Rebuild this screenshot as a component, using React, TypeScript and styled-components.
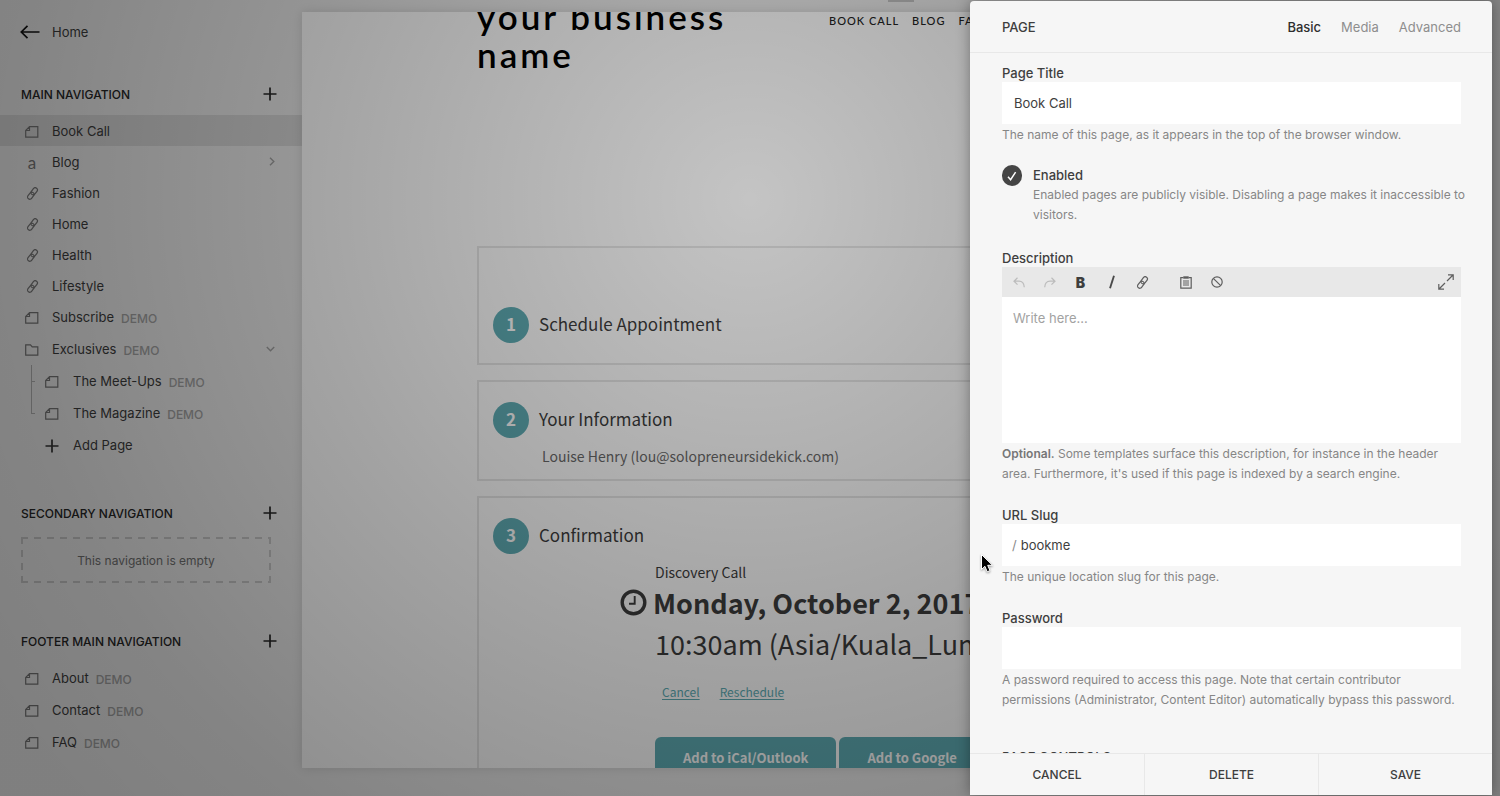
import React from "react";
import styled, { createGlobalStyle, css } from "styled-components";

const ui = `Inter, "Liberation Sans", sans-serif`;
const site = `"Noto Sans CJK SC", "Noto Sans", sans-serif`;
const brand = `Lato, "Liberation Sans", sans-serif`;
const teal = "#60aeb6";

const Global = createGlobalStyle`
  *, *::before, *::after { box-sizing: border-box; }
  body { margin: 0; font-family: ${ui}; background: #ebebeb; }
  button, input, textarea { font: inherit; color: inherit; border: 0; padding: 0; background: none; border-radius: 0; }
  a { color: inherit; text-decoration: none; }
  ul { list-style: none; margin: 0; padding: 0; }
  h1, h2, h3, p { margin: 0; font-weight: inherit; font-size: inherit; }
  svg { display: block; flex: none; }
`;

const Screen = styled.div`
  position: relative;
  display: flex;
  height: 100vh;
  overflow: hidden;
  background: #ebebeb;
`;

/* ---------- sidebar ---------- */

const Sidebar = styled.nav`
  flex: none;
  width: 302px;
  padding-top: 16px;
  color: #3c3c3c;
  font-size: 13px;
`;

const BackLink = styled.a`
  display: flex;
  align-items: center;
  gap: 12px;
  height: 32px;
  padding-left: 20px;
  margin-bottom: 31px;
`;

const SectionHead = styled.div`
  display: flex;
  align-items: center;
  justify-content: space-between;
  height: 30px;
  padding: 0 25px 0 21px;
  margin-bottom: 6px;
  font-size: 12px;
  font-weight: 500;
  color: #262626;
`;

const Section = styled.section`
  margin-bottom: 38px;
`;

const IconButton = styled.button`
  display: flex;
`;

const row = css`
  display: flex;
  align-items: center;
  width: 100%;
  padding-right: 27px;
`;

const Item = styled.a<{ $active?: boolean; $tall?: boolean; $nested?: boolean }>`
  ${row}
  height: ${(p) => (p.$tall ? 32 : 31)}px;
  padding-left: ${(p) => (p.$nested ? 45 : 25)}px;
  background: ${(p) => (p.$active ? "#d6d6d6" : "transparent")};
`;

const AddItem = styled.button`
  ${row}
  height: 31px;
  padding-left: 45px;
  text-align: left;
`;

const ItemIcon = styled.span<{ $dark?: boolean }>`
  display: flex;
  flex: none;
  justify-content: center;
  width: 14px;
  margin: 2px 13px 0 0;
  color: ${(p) => (p.$dark ? "#333" : "#767676")};
`;

const NestedIcon = styled(ItemIcon)`
  margin-right: 14px;
`;

const Letter = styled.span`
  font-family: ${brand};
  font-size: 17px;
  line-height: 17px;
`;

const Demo = styled.span`
  margin: 2px 0 0 7px;
  font-size: 12px;
  font-weight: 500;
  color: #a2a2a2;
`;

const Caret = styled.span`
  margin-left: auto;
  color: #a2a2a2;
`;

const SubList = styled.ul`
  position: relative;
  &::before {
    content: "";
    position: absolute;
    left: 31px;
    top: 0;
    bottom: 15px;
    border-left: 1px solid #b0b0b0;
  }
`;

const SubItem = styled.li`
  position: relative;
  &::before {
    content: "";
    position: absolute;
    left: 31px;
    top: 16px;
    width: 4px;
    border-top: 1px solid #b0b0b0;
  }
`;

const dashX = "linear-gradient(90deg, #c6c6c6 7px, transparent 7px)";
const dashY = "linear-gradient(180deg, #c6c6c6 7px, transparent 7px)";
const EmptyBox = styled.div`
  display: flex;
  align-items: center;
  justify-content: center;
  height: 46px;
  margin: 9px 31px 43px 21px;
  font-size: 12px;
  color: #707070;
  background:
    ${dashX} 0 0 / 13px 2px repeat-x,
    ${dashX} 0 100% / 13px 2px repeat-x,
    ${dashY} 0 0 / 2px 13px repeat-y,
    ${dashY} 100% 0 / 2px 13px repeat-y;
`;

/* ---------- website preview ---------- */

const Preview = styled.main`
  display: flex;
  flex: 1;
  flex-direction: column;
  min-width: 0;
  padding-bottom: 28px;
`;

const HandleStrip = styled.div`
  display: flex;
  flex: none;
  justify-content: center;
  height: 12px;
`;

const Handle = styled.span`
  width: 26px;
  height: 2px;
  background: #c0c0c0;
`;

const Frame = styled.div`
  flex: 1;
  min-height: 0;
  margin-right: 20px;
  overflow: hidden;
  background: #fff;
  box-shadow: 0 0 10px rgba(0, 0, 0, 0.12);
`;

const SitePage = styled.div`
  margin-top: -15px;
  padding: 0 0 40px 175px;
  color: #3d3d3d;
  font-family: ${site};
`;

const SiteHeader = styled.header`
  display: flex;
  align-items: flex-start;
  gap: 52px;
  height: 249px;
  font-family: ${brand};
  color: #000;
`;

const SiteTitle = styled.h1`
  flex: none;
  width: 300px;
  font-size: 35px;
  line-height: 38px;
  font-weight: 600;
  letter-spacing: 3px;
`;

const SiteNav = styled.nav`
  display: flex;
  gap: 13px;
  padding-top: 15px;
  font-size: 11px;
  line-height: 18px;
  font-weight: 500;
  letter-spacing: 1px;
  color: #222;
  white-space: nowrap;
`;

const Steps = styled.div`
  display: flex;
  flex-direction: column;
  gap: 15px;
`;

const Step = styled.section<{ $roomy?: boolean; $flush?: boolean }>`
  padding: ${(p) => (p.$roomy ? 59 : 20)}px 14px ${(p) => (p.$flush ? 11 : 20)}px;
  border: 2px solid #e7e7e7;
`;

const StepHead = styled.h2`
  display: flex;
  align-items: flex-start;
  gap: 10px;
  font-size: 17px;
  line-height: 34px;
`;

const StepNumber = styled.span`
  width: 36px;
  height: 36px;
  border-radius: 50%;
  background: ${teal};
  color: #fff;
  font-weight: 700;
  text-align: center;
`;

const StepNote = styled.p`
  margin: 6px 0 0 49px;
  font-size: 14px;
  line-height: 24px;
  color: #6a6a6a;
`;

const Booking = styled.div`
  display: grid;
  grid-template-columns: 27px 1fr;
  column-gap: 6px;
  margin: 8px 0 0 127px;
  white-space: nowrap;
  > * { grid-column: 2; }
`;

const ClockCell = styled.span`
  grid-column: 1;
  grid-row: 2;
  align-self: center;
`;

const Service = styled.p`
  padding-left: 2px;
  font-size: 14px;
  line-height: 20px;
`;

const When = styled.p<{ $bold?: boolean }>`
  padding-left: ${(p) => (p.$bold ? 0 : 2)}px;
  font-size: 27px;
  line-height: 41px;
  font-weight: ${(p) => (p.$bold ? 700 : 400)};
`;

const BookingLinks = styled.div`
  display: flex;
  gap: 20px;
  padding: 18px 0 35px 9px;
  font-size: 12px;
  line-height: 20px;
  color: ${teal};
  a { text-decoration: underline; text-underline-offset: 2px; }
`;

const CalendarButtons = styled.div`
  display: flex;
  gap: 3px;
  padding-left: 2px;
`;

const CalendarButton = styled.button`
  padding: 0 28px;
  border-radius: 6px;
  background: ${teal};
  color: #fff;
  font-size: 13px;
  line-height: 41px;
  font-weight: 700;
`;

/* ---------- settings dialog ---------- */

const Scrim = styled.div`
  position: absolute;
  inset: 0;
  background: radial-gradient(
    circle at 50% 25%,
    rgba(0, 0, 0, 0.23) 0,
    rgba(0, 0, 0, 0.36) 445px,
    rgba(0, 0, 0, 0.44) 745px,
    rgba(0, 0, 0, 0.46) 900px
  );
`;

const Dialog = styled.form`
  position: absolute;
  top: 1px;
  right: 8px;
  bottom: 1px;
  display: flex;
  flex-direction: column;
  width: 522px;
  border-radius: 4px 4px 0 0;
  background: #f6f6f6;
  box-shadow: 0 0 14px rgba(0, 0, 0, 0.35);
  color: #3e3e3e;
  font-size: 13px;
`;

const DialogHead = styled.header`
  display: flex;
  flex: none;
  align-items: center;
  justify-content: space-between;
  height: 52px;
  padding: 0 31px 0 32px;
  border-bottom: 1px solid #e8e8e8;
  font-weight: 500;
`;

const Tabs = styled.div`
  display: flex;
  gap: 20px;
`;

const Tab = styled.button<{ $active?: boolean }>`
  color: ${(p) => (p.$active ? "#2e2e2e" : "#8e8e8e")};
  font-weight: ${(p) => (p.$active ? 500 : 400)};
`;

const DialogBody = styled.div`
  flex: 1;
  min-height: 0;
  padding: 11px 31px 0 32px;
  overflow-y: auto;
  scrollbar-width: none;
`;

const Field = styled.div<{ $tight?: boolean }>`
  margin-bottom: ${(p) => (p.$tight ? 20 : 22)}px;
`;

const Label = styled.label`
  display: block;
  line-height: 18px;
  font-weight: 500;
`;

const TextInput = styled.input`
  display: block;
  width: 100%;
  height: 42px;
  padding: 0 12px;
  background: #fff;
  outline: none;
`;

const SlugBox = styled.div`
  display: flex;
  align-items: center;
  gap: 4px;
  padding-left: 10px;
  background: #fff;
  ${TextInput} { padding: 0; }
`;

const Slash = styled.span`
  color: #8a8a8a;
`;

const Help = styled.p`
  margin-top: 1px;
  font-size: 12px;
  line-height: 20px;
  color: #868686;
  strong { font-weight: 600; color: #777; }
`;

const EnabledRow = styled.div`
  display: flex;
  gap: 11px;
  margin: 0 -8px 24px 0;
  ${Label} { line-height: 20px; }
  ${Help} { margin-top: 0; }
`;

const Check = styled.span`
  display: grid;
  flex: none;
  place-items: center;
  height: 21px;
  > * { grid-area: 1 / 1; }
  svg { pointer-events: none; }
`;

const CheckInput = styled.input`
  appearance: none;
  width: 20px;
  height: 21px;
  margin: 0;
  border-radius: 10px;
  background: #454545;
`;

const Toolbar = styled.div`
  display: flex;
  height: 30px;
  padding-left: 1px;
  background: #e8e8e8;
`;

const Tool = styled.button<{ $muted?: boolean; $spaced?: boolean; $end?: boolean }>`
  display: flex;
  align-items: center;
  justify-content: center;
  width: 31px;
  height: 30px;
  margin-left: ${(p) => (p.$end ? "auto" : p.$spaced ? "12px" : "0")};
  color: ${(p) => (p.$muted ? "#bcbcbc" : "#5e5e5e")};
`;

const BoldGlyph = styled.b`
  font-size: 14px;
  font-weight: 900;
  color: #3e3e3e;
`;

const Editor = styled.textarea`
  display: block;
  width: 100%;
  height: 146px;
  padding: 11px;
  resize: none;
  outline: none;
  background: #fff;
  line-height: 20px;
  &::placeholder { color: #a2a2a2; opacity: 1; }
`;

const GroupTitle = styled.h3`
  padding-top: 16px;
  line-height: 18px;
  font-size: 13px;
  font-weight: 500;
`;

const DialogFoot = styled.footer`
  display: grid;
  flex: none;
  grid-template-columns: repeat(3, 1fr);
  height: 42px;
  border-top: 1px solid #e8e8e8;
`;

const FootButton = styled.button`
  font-size: 12px;
  font-weight: 500;
  & + & { border-left: 1px solid #e8e8e8; }
`;

const Pointer = styled.span`
  position: absolute;
  left: 10px;
  top: 552px;
  filter: drop-shadow(0 1px 1px rgba(0, 0, 0, 0.4));
`;

/* ---------- icons ---------- */

const line = { fill: "none", stroke: "currentColor" } as const;

const PlusIcon = () => (
  <svg width="14" height="14" viewBox="0 0 14 14" {...line} strokeWidth="1.7">
    <path d="M7 .5v13M.5 7h13" />
  </svg>
);
const BackIcon = () => (
  <svg width="20" height="14" viewBox="0 0 20 14" fill="none" stroke="#111" strokeWidth="1.7">
    <path d="M1.500 7H19.500M7.500 .8 1.300 7l6.200 6.200" />
  </svg>
);
const PageIcon = () => (
  <svg width="14" height="12" viewBox="0 0 14 12" {...line} strokeWidth="1.2">
    <path d="M4.500 .7h8.300v10.500H.7V4.500zM4.500 .7v3.800H.7" />
  </svg>
);
const FolderIcon = () => (
  <svg width="14" height="12" viewBox="0 0 14 12" {...line} strokeWidth="1.2">
    <path d="M.7 .9h4.800l1.700 1.900h5.600v8.300H.7z" />
  </svg>
);
const LinkIcon = () => (
  <svg width="13" height="13" viewBox="0 0 14 14" {...line} strokeWidth="1.3">
    <g transform="rotate(-53 7 7)">
      <rect x="-.2" y="4.600" width="8.400" height="4.800" rx="2.400" />
      <rect x="5.800" y="4.600" width="8.400" height="4.800" rx="2.400" />
    </g>
  </svg>
);
const RightIcon = () => (
  <svg width="6" height="9" viewBox="0 0 6 9" {...line} strokeWidth="1.400">
    <path d="M1 .8 4.800 4.500 1 8.200" />
  </svg>
);
const DownIcon = () => (
  <svg width="9" height="6" viewBox="0 0 9 6" {...line} strokeWidth="1.400">
    <path d="M.8 1 4.500 4.800 8.200 1" />
  </svg>
);
const ClockIcon = () => (
  <svg width="27" height="27" viewBox="0 0 27 27" {...line}>
    <circle cx="13.500" cy="13.500" r="11.300" strokeWidth="3.400" />
    <path d="M14.700 7v7.700H9" strokeWidth="1.900" />
  </svg>
);
const CheckIcon = () => (
  <svg width="10" height="10" viewBox="0 0 10 10" fill="none" stroke="#fff" strokeWidth="1.500">
    <path d="M1 5.800 3.600 8.700 8.600 1.200" />
  </svg>
);
const UndoIcon = () => (
  <svg width="12" height="11" viewBox="0 0 12 11" {...line} strokeWidth="1.200">
    <path d="M4.500 .8 1 4.200l3.500 3.400M1 4.200h5c3.500 0 5 2.500 5.300 6" />
  </svg>
);
const RedoIcon = () => (
  <svg width="12" height="11" viewBox="0 0 12 11" {...line} strokeWidth="1.200">
    <path d="M7.500 .8 11 4.200 7.500 7.600M11 4.200H6C2.500 4.200 1 6.700 .7 10.200" />
  </svg>
);
const ItalicIcon = () => (
  <svg width="8" height="14" viewBox="0 0 8 14" fill="none" stroke="#4a4a4a" strokeWidth="1.900">
    <path d="M6 .8 2 13.200" />
  </svg>
);
const ClipboardIcon = () => (
  <svg width="12" height="13" viewBox="0 0 12 13" {...line} strokeWidth="1.200">
    <path d="M3.500 1.600H.8v10.600h10.400V1.600H8.500" />
    <path d="M3.300 1.500h5.400" strokeWidth="2.400" />
    <path d="M3 5h6M3 7h6M3 9h6" />
  </svg>
);
const BanIcon = () => (
  <svg width="12" height="12" viewBox="0 0 12 12" {...line} strokeWidth="1.200">
    <circle cx="6" cy="6" r="5.200" />
    <path d="M2.300 2.300 9.700 9.700" />
  </svg>
);
const ExpandIcon = () => (
  <svg width="16" height="16" viewBox="0 0 16 16" {...line} strokeWidth="1.200">
    <path d="M9 7l6-6M10 .8h5.200V6M7 9l-6 6M.8 10v5.200H6" />
  </svg>
);
const PointerIcon = () => (
  <svg width="14" height="21" viewBox="0 0 14 21">
    <path
      d="M1.500 1.500v15l3.400-3.200 2.300 5.500 2.800-1.200-2.300-5.300h4.800z"
      fill="#000"
      stroke="#fff"
      strokeWidth="1"
    />
  </svg>
);

/* ---------- data ---------- */

type Kind = "page" | "blog" | "link" | "folder";
type Entry = { label: string; kind: Kind; demo?: boolean; active?: boolean; caret?: "right" | "down" };

const mainItems: Entry[] = [
  { label: "Book Call", kind: "page", active: true },
  { label: "Blog", kind: "blog", caret: "right" },
  { label: "Fashion", kind: "link" },
  { label: "Home", kind: "link" },
  { label: "Health", kind: "link" },
  { label: "Lifestyle", kind: "link" },
  { label: "Subscribe", kind: "page", demo: true },
  { label: "Exclusives", kind: "folder", demo: true, caret: "down" },
];
const exclusives = ["The Meet-Ups", "The Magazine"];
const footerItems: Entry[] = ["About", "Contact", "FAQ"].map((label) => ({ label, kind: "page", demo: true }));

const icons: Record<Kind, React.ReactNode> = {
  page: <PageIcon />,
  blog: <Letter>a</Letter>,
  link: <LinkIcon />,
  folder: <FolderIcon />,
};

const NavEntry = ({ label, kind, demo, active, caret }: Entry) => (
  <Item href="#" $active={active} $tall={demo}>
    <ItemIcon>{icons[kind]}</ItemIcon>
    {label}
    {demo && <Demo>DEMO</Demo>}
    {caret && <Caret>{caret === "right" ? <RightIcon /> : <DownIcon />}</Caret>}
  </Item>
);

const Heading = ({ children }: { children: string }) => (
  <SectionHead>
    <h2>{children}</h2>
    <IconButton type="button" aria-label="Add page">
      <PlusIcon />
    </IconButton>
  </SectionHead>
);

export default function App() {
  return (
    <>
      <Global />
      <Screen>
        <Sidebar>
          <BackLink href="#">
            <BackIcon />
            Home
          </BackLink>
          <Section>
            <Heading>MAIN NAVIGATION</Heading>
            <ul>
              {mainItems.map((item) => (
                <li key={item.label}>
                  <NavEntry {...item} />
                </li>
              ))}
            </ul>
            <SubList>
              {exclusives.map((label) => (
                <SubItem key={label}>
                  <Item href="#" $nested $tall>
                    <NestedIcon>
                      <PageIcon />
                    </NestedIcon>
                    {label}
                    <Demo>DEMO</Demo>
                  </Item>
                </SubItem>
              ))}
            </SubList>
            <AddItem type="button">
              <NestedIcon $dark>
                <PlusIcon />
              </NestedIcon>
              Add Page
            </AddItem>
          </Section>
          <Heading>SECONDARY NAVIGATION</Heading>
          <EmptyBox>This navigation is empty</EmptyBox>
          <Heading>FOOTER MAIN NAVIGATION</Heading>
          <ul>
            {footerItems.map((item) => (
              <li key={item.label}>
                <NavEntry {...item} />
              </li>
            ))}
          </ul>
        </Sidebar>

        <Preview>
          <HandleStrip>
            <Handle />
          </HandleStrip>
          <Frame>
            <SitePage>
              <SiteHeader>
                <SiteTitle>your business name</SiteTitle>
                <SiteNav>
                  <a href="#">BOOK CALL</a>
                  <a href="#">BLOG</a>
                  <a href="#">FASHION</a>
                </SiteNav>
              </SiteHeader>
              <Steps>
                <Step $roomy>
                  <StepHead>
                    <StepNumber>1</StepNumber>Schedule Appointment
                  </StepHead>
                </Step>
                <Step $flush>
                  <StepHead>
                    <StepNumber>2</StepNumber>Your Information
                  </StepHead>
                  <StepNote>Louise Henry (lou@solopreneursidekick.com)</StepNote>
                </Step>
                <Step>
                  <StepHead>
                    <StepNumber>3</StepNumber>Confirmation
                  </StepHead>
                  <Booking>
                    <Service>Discovery Call</Service>
                    <ClockCell>
                      <ClockIcon />
                    </ClockCell>
                    <When $bold>Monday, October 2, 2017</When>
                    <When>10:30am (Asia/Kuala_Lumpur)</When>
                    <BookingLinks>
                      <a href="#">Cancel</a>
                      <a href="#">Reschedule</a>
                    </BookingLinks>
                    <CalendarButtons>
                      <CalendarButton type="button">Add to iCal/Outlook</CalendarButton>
                      <CalendarButton type="button">Add to Google</CalendarButton>
                    </CalendarButtons>
                  </Booking>
                </Step>
              </Steps>
            </SitePage>
          </Frame>
        </Preview>

        <Scrim />

        <Dialog aria-label="Page settings" onSubmit={(e) => e.preventDefault()}>
          <DialogHead>
            <h2>PAGE</h2>
            <Tabs>
              <Tab type="button" $active>
                Basic
              </Tab>
              <Tab type="button">Media</Tab>
              <Tab type="button">Advanced</Tab>
            </Tabs>
          </DialogHead>
          <DialogBody>
            <Field $tight>
              <Label htmlFor="title">Page Title</Label>
              <TextInput id="title" defaultValue="Book Call" />
              <Help>The name of this page, as it appears in the top of the browser window.</Help>
            </Field>
            <EnabledRow>
              <Check>
                <CheckInput id="enabled" type="checkbox" defaultChecked />
                <CheckIcon />
              </Check>
              <div>
                <Label htmlFor="enabled">Enabled</Label>
                <Help>
                  Enabled pages are publicly visible. Disabling a page makes it inaccessible to visitors.
                </Help>
              </div>
            </EnabledRow>
            <Field>
              <Label htmlFor="description">Description</Label>
              <Toolbar>
                <Tool type="button" $muted aria-label="Undo"><UndoIcon /></Tool>
                <Tool type="button" $muted aria-label="Redo"><RedoIcon /></Tool>
                <Tool type="button" aria-label="Bold"><BoldGlyph>B</BoldGlyph></Tool>
                <Tool type="button" aria-label="Italic"><ItalicIcon /></Tool>
                <Tool type="button" aria-label="Link"><LinkIcon /></Tool>
                <Tool type="button" $spaced aria-label="Paste"><ClipboardIcon /></Tool>
                <Tool type="button" aria-label="Clear formatting"><BanIcon /></Tool>
                <Tool type="button" $end aria-label="Expand"><ExpandIcon /></Tool>
              </Toolbar>
              <Editor id="description" placeholder="Write here..." />
              <Help>
                <strong>Optional.</strong> Some templates surface this description, for instance in the header
                area. Furthermore, it's used if this page is indexed by a search engine.
              </Help>
            </Field>
            <Field>
              <Label htmlFor="slug">URL Slug</Label>
              <SlugBox>
                <Slash>/</Slash>
                <TextInput id="slug" defaultValue="bookme" />
              </SlugBox>
              <Help>The unique location slug for this page.</Help>
            </Field>
            <Field>
              <Label htmlFor="password">Password</Label>
              <TextInput id="password" type="password" />
              <Help>
                A password required to access this page. Note that certain contributor permissions
                (Administrator, Content Editor) automatically bypass this password.
              </Help>
            </Field>
            <GroupTitle>PAGE CONTROLS</GroupTitle>
          </DialogBody>
          <DialogFoot>
            <FootButton type="button">CANCEL</FootButton>
            <FootButton type="button">DELETE</FootButton>
            <FootButton type="submit">SAVE</FootButton>
          </DialogFoot>
          <Pointer aria-hidden="true">
            <PointerIcon />
          </Pointer>
        </Dialog>
      </Screen>
    </>
  );
}
